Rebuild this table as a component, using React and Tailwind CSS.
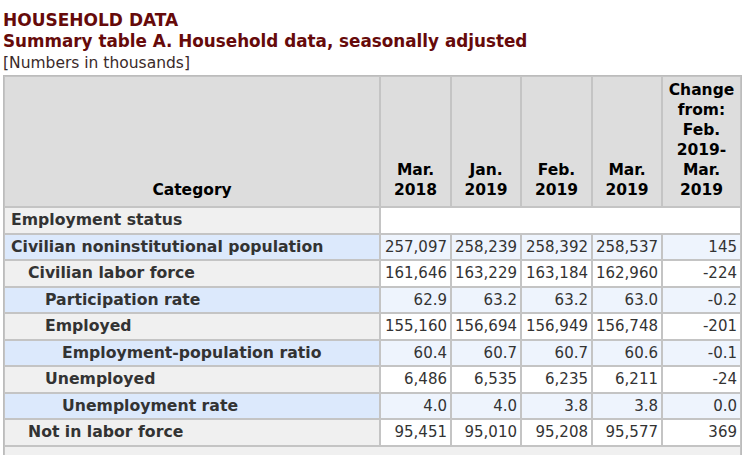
import React from 'react'

const rows = [
    { label: 'Civilian noninstitutional population', indent: 0, blue: true, vals: ['257,097', '258,239', '258,392', '258,537', '145'] },
    { label: 'Civilian labor force', indent: 1, blue: false, vals: ['161,646', '163,229', '163,184', '162,960', '-224'] },
    { label: 'Participation rate', indent: 2, blue: true, vals: ['62.9', '63.2', '63.2', '63.0', '-0.2'] },
    { label: 'Employed', indent: 2, blue: false, vals: ['155,160', '156,694', '156,949', '156,748', '-201'] },
    { label: 'Employment-population ratio', indent: 3, blue: true, vals: ['60.4', '60.7', '60.7', '60.6', '-0.1'] },
    { label: 'Unemployed', indent: 2, blue: false, vals: ['6,486', '6,535', '6,235', '6,211', '-24'] },
    { label: 'Unemployment rate', indent: 3, blue: true, vals: ['4.0', '4.0', '3.8', '3.8', '0.0'] },
    { label: 'Not in labor force', indent: 1, blue: false, vals: ['95,451', '95,010', '95,208', '95,577', '369'] },
]

const indents = ['pl-[6px]', 'pl-[23px]', 'pl-[40px]', 'pl-[57px]']

const App = () => {
    return (
        <div className="w-[749px] h-[455px] overflow-hidden bg-white pl-[3px] pt-[10px] font-['DejaVu_Sans',Verdana,sans-serif]">
            {/* Titles */}
            <h2 className="text-[17px] leading-[21px] font-bold text-[#660a0a]">HOUSEHOLD DATA</h2>
            <h3 className="text-[16.8px] leading-[20px] font-bold text-[#660a0a]">Summary table A. Household data, seasonally adjusted</h3>
            <p className="text-[15.5px] leading-[24px] text-[#3a2a2a]">[Numbers in thousands]</p>

            <table className="table-fixed border-separate border-spacing-0 border border-[#bcbcbc] w-[739px] text-[#333]">
                <colgroup>
                    <col className="w-[376px]" />
                    <col className="w-[71px]" />
                    <col className="w-[70px]" />
                    <col className="w-[71px]" />
                    <col className="w-[70px]" />
                    <col className="w-[79px]" />
                </colgroup>
                <thead>
                    <tr className="h-[131px] bg-[#dddddd] text-black text-[15.5px] leading-[20px] font-bold">
                        <th className="border border-[#c4c4c4] align-bottom pb-[6px] text-center">Category</th>
                        <th className="border border-[#c4c4c4] align-bottom pb-[6px] text-center">Mar.<br />2018</th>
                        <th className="border border-[#c4c4c4] align-bottom pb-[6px] text-center">Jan.<br />2019</th>
                        <th className="border border-[#c4c4c4] align-bottom pb-[6px] text-center">Feb.<br />2019</th>
                        <th className="border border-[#c4c4c4] align-bottom pb-[6px] text-center">Mar.<br />2019</th>
                        <th className="border border-[#c4c4c4] align-bottom pb-[6px] text-center">Change from: Feb. 2019-<br />Mar.<br />2019</th>
                    </tr>
                </thead>
                <tbody className="text-[15px] leading-[18px]">
                    <tr className="h-[26.5px]">
                        <th className="border border-[#c4c4c4] bg-[#f0f0f0] text-left font-bold text-[15.7px] pl-[6px]">Employment status</th>
                        <td colSpan={5} className="border border-[#c4c4c4] bg-white"></td>
                    </tr>
                    {rows.map((r) => (
                        <tr key={r.label} className="h-[26.5px]">
                            <th className={`border border-[#c4c4c4] text-left font-bold text-[15.7px] whitespace-nowrap ${indents[r.indent]} ${r.blue ? 'bg-[#dce9fc]' : 'bg-[#f0f0f0]'}`}>
                                {r.label}
                            </th>
                            {r.vals.map((v, i) => (
                                <td key={i} className={`border border-[#c4c4c4] text-right pr-[3px] whitespace-nowrap ${r.blue ? 'bg-[#eef4fd]' : 'bg-white'}`}>
                                    {v}
                                </td>
                            ))}
                        </tr>
                    ))}
                    <tr className="h-[27px]">
                        <td colSpan={6} className="border border-[#c4c4c4] bg-[#f0f0f0]"></td>
                    </tr>
                </tbody>
            </table>
        </div>
    )
}

export default App
